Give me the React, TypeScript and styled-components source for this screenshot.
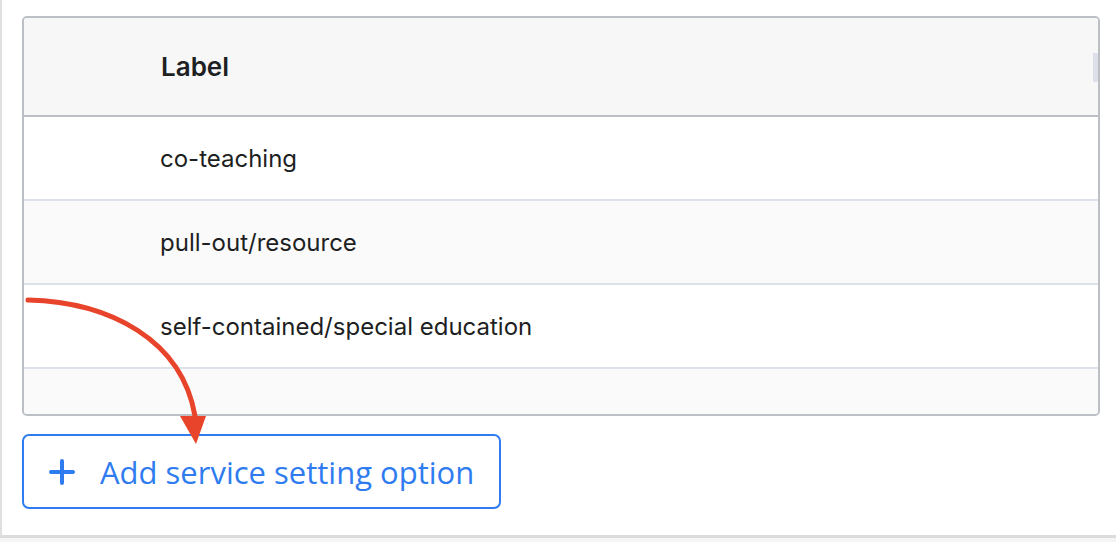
import styled, { createGlobalStyle } from "styled-components"
import React from "react"

const GlobalStyle = createGlobalStyle`
  html, body {
    margin: 0;
    padding: 0;
    background: #f5f5f5;
  }
  * {
    box-sizing: border-box;
  }
`

const options = [
  "co-teaching",
  "pull-out/resource",
  "self-contained/special education",
  ""
]

export default function App() {
  return <>
    <GlobalStyle />
    <Page>
      <Table>
        <HeaderRow>
          <HeaderCell>Label</HeaderCell>
          <ScrollThumb />
        </HeaderRow>
        <Body>
          {options.map((label, i) => (
            <Row key={i} $striped={i % 2 === 1}>
              <Cell>{label}</Cell>
            </Row>
          ))}
        </Body>
      </Table>
      <AddButton type="button">
        <PlusIcon viewBox="0 0 26 26">
          <path d="M13 2v22M2 13h22" stroke="currentColor" strokeWidth="4" strokeLinecap="round" />
        </PlusIcon>
        Add service setting option
      </AddButton>
      <Arrow viewBox="0 0 240 170" width="240" height="170">
        <path d="M28 20 C 110 22, 182 60, 195 136" fill="none" stroke="#e8432b" strokeWidth="5" strokeLinecap="round" />
        <polygon points="180,136 206,136 196,164" fill="#e8432b" />
      </Arrow>
    </Page>
  </>
}

const Page = styled.div`
  position: relative;
  height: 538px;
  background: #fff;
  border-left: 2px solid #e0e0e0;
  border-bottom: 3px solid #dcdcdc;
  padding: 16px 16px 0 20px;
`

const Table = styled.div`
  position: relative;
  width: 1078px;
  height: 400px;
  border: 2px solid #bcc0c5;
  border-radius: 5px;
  overflow: hidden;
  display: flex;
  flex-direction: column;
`

const HeaderRow = styled.div`
  position: relative;
  flex: 0 0 99px;
  display: flex;
  align-items: center;
  background: #f7f7f7;
  border-bottom: 2px solid #bcc0c5;
  padding-left: 137px;
`

const HeaderCell = styled.div`
  font-family: Inter, "Noto Sans", sans-serif;
  font-weight: 600;
  font-size: 26px;
  color: #1d1f22;
`

const ScrollThumb = styled.div`
  position: absolute;
  right: 0;
  top: 35px;
  width: 5px;
  height: 29px;
  background: #dce0e8;
`

const Body = styled.div`
  flex: 1;
  overflow: hidden;
`

const Row = styled.div<{ $striped: boolean }>`
  height: 84px;
  display: flex;
  align-items: center;
  padding-left: 136px;
  background: ${p => p.$striped ? "#fafafa" : "#fff"};
  border-bottom: 2px solid #dde1ea;
`

const Cell = styled.div`
  font-family: Inter, "Noto Sans", sans-serif;
  font-size: 24px;
  color: #1d1f22;
`

const AddButton = styled.button`
  margin-top: 18px;
  width: 479px;
  height: 75px;
  display: flex;
  align-items: center;
  gap: 25px;
  padding: 0 0 0 25px;
  background: #fff;
  border: 2px solid #2f7cf0;
  border-radius: 7px;
  color: #2f7cf0;
  font-family: "Open Sans", sans-serif;
  font-size: 31px;
  cursor: pointer;
`

const PlusIcon = styled.svg`
  width: 26px;
  height: 26px;
  flex: 0 0 26px;
`

const Arrow = styled.svg`
  position: absolute;
  left: -2px;
  top: 280px;
  overflow: visible;
`
